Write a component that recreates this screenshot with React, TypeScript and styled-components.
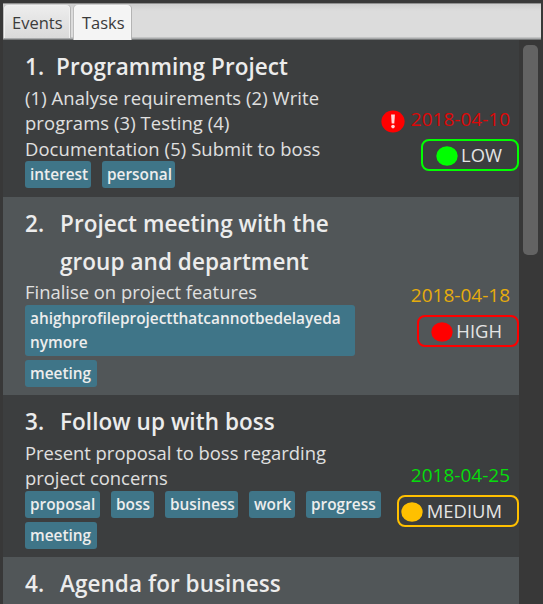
import React from 'react';
import styled, { createGlobalStyle } from 'styled-components';

const Global = createGlobalStyle`
  * { box-sizing: border-box; }
  body { margin: 0; background: #383838; overflow: hidden; font-family: "Open Sans", "Noto Sans", sans-serif; }
`;

const Window = styled.div`
  display: flex;
  flex-direction: column;
  width: 543px;
  height: 604px;
  padding: 3px 2px 0 3px;
  background: #383838;
  overflow: hidden;
`;

const TabBar = styled.div`
  display: flex;
  flex: none;
  gap: 4px;
  height: 37px;
  padding: 1px 1px 0 1px;
  border-top: 1px solid #8f8f8f;
  border-bottom: 1px solid #77797a;
  background: linear-gradient(#cdcdcd, #dcdcdc 7px, #dcdcdc 33px, #a9abac 34px);
`;

const Tab = styled.div<{ $active?: boolean; $width: number }>`
  width: ${(p) => p.$width}px;
  height: ${(p) => (p.$active ? 35 : 33)}px;
  padding-left: 7px;
  border: 1px solid ${(p) => (p.$active ? '#f7f7f7' : '#f1f1f1')};
  border-bottom: 0;
  border-radius: 4px 4px 0 0;
  box-shadow: 1px 0 0 #b4b4b4, -1px 0 0 #bdbdbd;
  background: ${(p) => (p.$active ? '#f4f4f4' : 'linear-gradient(#ededed, #dadada)')};
  color: #3b3b3b;
  font-size: 16.5px;
  line-height: 33px;
  white-space: nowrap;
`;

const Body = styled.div`
  display: flex;
  flex: 1;
  min-height: 0;
`;

const List = styled.div`
  width: 516px;
  overflow: hidden;
`;

const Card = styled.div<{ $alt: boolean; $height: number }>`
  display: flex;
  justify-content: space-between;
  height: ${(p) => p.$height}px;
  padding: 7px 0 0 22px;
  background: ${(p) => (p.$alt ? '#515658' : '#3c3e3f')};
`;

const Info = styled.div`
  flex: none;
  width: 360px;
`;

const Heading = styled.div<{ $indent: number }>`
  display: grid;
  grid-template-columns: ${(p) => p.$indent}px auto;
  margin-bottom: -1px;
  padding-top: 1px;
  color: #ececec;
  font-size: 22.5px;
  font-weight: 600;
  letter-spacing: 0.06px;
  line-height: 37.5px;
  white-space: pre;
`;

const Description = styled.div<{ $tracking?: number }>`
  color: #e0e0e0;
  font-size: 18.4px;
  letter-spacing: ${(p) => p.$tracking ?? 0}px;
  line-height: 25.5px;
  white-space: pre;
`;

const Tags = styled.div`
  display: flex;
  flex-wrap: wrap;
  gap: 4px 11px;
`;

const Tag = styled.span<{ $width: number }>`
  width: ${(p) => p.$width}px;
  padding: 2px 0 1px 5px;
  border-radius: 3px;
  background: #3f7588;
  color: #ededed;
  font-size: 15.4px;
  font-weight: 600;
  line-height: 24px;
  white-space: pre;
`;

const Status = styled.div<{ $top: number }>`
  display: flex;
  flex: none;
  flex-direction: column;
  align-items: flex-end;
  width: 0;
  padding-top: ${(p) => p.$top}px;
`;

const DateRow = styled.div<{ $color: string }>`
  display: flex;
  align-items: center;
  gap: 6px;
  height: 26px;
  margin-bottom: 7px;
  padding-right: 9px;
  color: ${(p) => p.$color};
  font-size: 19px;
  line-height: 26px;
  white-space: nowrap;

  svg { margin-top: 5px; }
`;

const Badge = styled.div<{ $color: string; $width: number; $gap: number }>`
  display: flex;
  align-items: center;
  justify-content: flex-end;
  gap: ${(p) => p.$gap}px;
  width: ${(p) => p.$width}px;
  height: 32px;
  padding-right: 15px;
  border: 2px solid ${(p) => p.$color};
  border-radius: 8px;
  color: #e4e4e4;
  font-size: 18.4px;
  line-height: 28px;

  svg { margin-top: 2px; }
`;

const ScrollTrack = styled.div`
  flex: 1;
  padding: 5px 3px 0 4px;
`;

const ScrollThumb = styled.div`
  width: 15px;
  height: 210px;
  border-radius: 5px;
  background: #636363;
`;

interface Task {
  title: string;
  indent: number;
  height: number;
  lines: string;
  tracking?: number;
  tags: [string, number][];
  date: string;
  dateColor: string;
  statusTop: number;
  overdue?: boolean;
  level: string;
  levelColor: string;
  badgeWidth: number;
  badgeGap: number;
}

const tasks: Task[] = [
  {
    title: 'Programming Project', indent: 31, height: 157,
    lines: '(1) Analyse requirements (2) Write\nprograms (3) Testing (4)\nDocumentation (5) Submit to boss',
    tracking: 0.1,
    tags: [['interest', 66], ['personal', 73]],
    date: '2018-04-10', dateColor: '#dc0808', statusTop: 59, overdue: true,
    level: 'LOW', levelColor: '#00ff00', badgeWidth: 98, badgeGap: 3,
  },
  {
    title: 'Project meeting with the\ngroup and department', indent: 35, height: 198,
    lines: 'Finalise on project features',
    tags: [['ahighprofileprojectthatcannotbedelayeda\nnymore', 330], ['meeting', 72]],
    date: '2018-04-18', dateColor: '#e6ac0c', statusTop: 78,
    level: 'HIGH', levelColor: '#ff0000', badgeWidth: 102, badgeGap: 3,
  },
  {
    title: 'Follow up with boss', indent: 35, height: 162,
    lines: 'Present proposal to boss regarding\nproject concerns',
    tags: [['proposal', 75], ['boss', 43], ['business', 73], ['work', 46], ['progress', 75], ['meeting', 72]],
    date: '2018-04-25', dateColor: '#06dc0c', statusTop: 60,
    level: 'MEDIUM', levelColor: '#ffc000', badgeWidth: 122, badgeGap: 4,
  },
];

const Dot = ({ color }: { color: string }) => (
  <svg width="22" height="20" viewBox="0 0 22 20">
    <ellipse cx="11" cy="10" rx="10.7" ry="9.8" fill={color} />
  </svg>
);

const Alert = () => (
  <svg width="24" height="23" viewBox="0 0 24 23">
    <ellipse cx="12" cy="11.5" rx="11.6" ry="11" fill="#ff0000" />
    <path d="M10.1 4.5h3.8l-.6 9h-2.6z" fill="#ffd8d8" />
    <circle cx="12" cy="16.6" r="1.8" fill="#ffd8d8" />
  </svg>
);

export default function App() {
  return (
    <>
      <Global />
      <Window>
        <TabBar>
          <Tab $width={66}>Events</Tab>
          <Tab $width={57} $active>Tasks</Tab>
        </TabBar>
        <Body>
          <List>
            {tasks.map((t, i) => (
              <Card key={t.title} $alt={i % 2 === 1} $height={t.height}>
                <Info>
                  <Heading $indent={t.indent}>
                    <span>{i + 1}.</span>
                    <span>{t.title}</span>
                  </Heading>
                  <Description $tracking={t.tracking}>{t.lines}</Description>
                  <Tags>
                    {t.tags.map(([label, width]) => (
                      <Tag key={label} $width={width}>{label}</Tag>
                    ))}
                  </Tags>
                </Info>
                <Status $top={t.statusTop}>
                  <DateRow $color={t.dateColor}>
                    {t.overdue && <Alert />}
                    {t.date}
                  </DateRow>
                  <Badge $color={t.levelColor} $width={t.badgeWidth} $gap={t.badgeGap}>
                    <Dot color={t.levelColor} />
                    {t.level}
                  </Badge>
                </Status>
              </Card>
            ))}
            <Card $alt $height={160}>
              <Heading $indent={35}>
                <span>4.</span>
                <span>Agenda for business</span>
              </Heading>
            </Card>
          </List>
          <ScrollTrack>
            <ScrollThumb />
          </ScrollTrack>
        </Body>
      </Window>
    </>
  );
}
